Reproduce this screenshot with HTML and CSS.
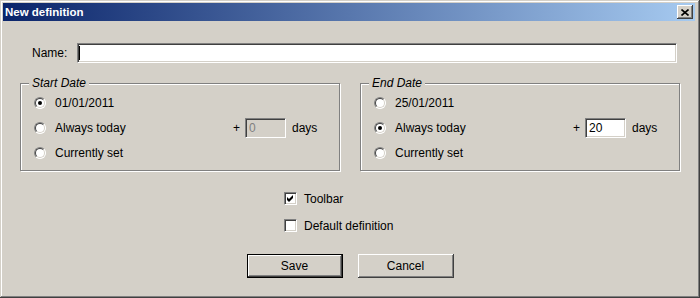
FILE: index.html
```html
<!DOCTYPE html>
<html lang="en">
<head>
  <meta charset="UTF-8" />
  <title>New definition</title>
  <link rel="stylesheet" href="styles.css">
</head>
<body>
  <div class="window">
    <div class="titlebar">
      <span class="title">New definition</span>
      <span class="close">
        <svg width="8" height="7" viewBox="0 0 8 7"><path d="M0.5 0.5 L7.5 6.5 M7.5 0.5 L0.5 6.5" stroke="#000" stroke-width="1.6" fill="none"/></svg>
      </span>
    </div>

    <div class="content">
      <div class="name-row">
        <label>Name:</label>
        <div class="field name-field"><span class="caret"></span></div>
      </div>

      <div class="groups">
        <fieldset class="group">
          <legend>Start Date</legend>
          <div class="opt-row"><span class="opt"><span class="radio on"></span>01/01/2011</span></div>
          <div class="opt-row">
            <span class="opt"><span class="radio"></span>Always today</span>
            <span class="plus">+</span>
            <div class="field days-field disabled">0</div>
            <span class="days">days</span>
          </div>
          <div class="opt-row"><span class="opt"><span class="radio"></span>Currently set</span></div>
        </fieldset>

        <fieldset class="group">
          <legend>End Date</legend>
          <div class="opt-row"><span class="opt"><span class="radio"></span>25/01/2011</span></div>
          <div class="opt-row">
            <span class="opt"><span class="radio on"></span>Always today</span>
            <span class="plus">+</span>
            <div class="field days-field">20</div>
            <span class="days">days</span>
          </div>
          <div class="opt-row"><span class="opt"><span class="radio"></span>Currently set</span></div>
        </fieldset>
      </div>

      <div class="checks">
        <div class="check-row">
          <span class="checkbox"><svg width="7" height="7" viewBox="0 0 7 7"><path d="M0 2 L2 4 L6 0 L6 3 L2 7 L0 5 Z" fill="#000"/></svg></span>
          Toolbar
        </div>
        <div class="check-row">
          <span class="checkbox"></span>
          Default definition
        </div>
      </div>

      <div class="buttons">
        <button class="btn default">Save</button>
        <button class="btn">Cancel</button>
      </div>
    </div>
  </div>
</body>
</html>
```

FILE: styles.css
```css
body {
  margin: 0;
  font-family: "Liberation Sans", Arial, sans-serif;
  font-size: 12px;
  color: #000;
}

.window {
  width: 700px;
  height: 298px;
  box-sizing: border-box;
  background: #d4d0c8;
  padding: 3px 5px 4px 3px;
  box-shadow: inset -1px -1px #404040, inset 1px 1px #d4d0c8, inset -2px -2px #808080, inset 2px 2px #fff;
}

.titlebar {
  height: 18px;
  display: flex;
  align-items: center;
  justify-content: space-between;
  padding: 0 2px;
  background: linear-gradient(to right, #0a246a, #a6caf0);
}

.title {
  color: #fff;
  font-weight: bold;
  font-size: 11.5px;
}

.close {
  width: 16px;
  height: 14px;
  box-sizing: border-box;
  background: #d4d0c8;
  box-shadow: inset -1px -1px #404040, inset 1px 1px #fff, inset -2px -2px #808080;
  display: flex;
  align-items: center;
  justify-content: center;
}

.content {
  padding: 22px 15px 0 17px;
}

.name-row {
  display: flex;
  align-items: center;
  padding: 0 3px 0 12px;
}

.name-row label {
  flex: 0 0 45px;
}

.field {
  height: 20px;
  box-sizing: border-box;
  background: #fff;
  border: 1px solid;
  border-color: #808080 #fff #fff #808080;
  box-shadow: inset 1px 1px #404040, inset -1px -1px #d4d0c8;
  padding: 0 3px;
  display: flex;
  align-items: center;
}

.name-field {
  flex: 1;
  padding-left: 1px;
}

.caret {
  width: 1px;
  height: 14px;
  background: #000;
}

.groups {
  display: flex;
  gap: 20px;
  margin-top: 13px;
}

.group {
  flex: 0 0 320px;
  box-sizing: border-box;
  min-width: 0;
  margin: 0;
  padding: 0 8px 5px 8px;
  border: 1px solid #808080;
  box-shadow: 1px 1px 0 #fff, inset 1px 1px 0 #fff;
}

.group legend {
  padding: 0 3px;
  font-style: italic;
  line-height: 14px;
  background: #d4d0c8;
}

.opt-row {
  height: 25px;
  display: flex;
  align-items: center;
  padding-left: 5px;
}

.opt {
  flex: 0 0 199px;
  display: flex;
  align-items: center;
  gap: 9px;
}

.radio {
  position: relative;
  width: 12px;
  height: 12px;
  box-sizing: border-box;
  border-radius: 50%;
  border: 1px solid;
  border-color: #808080 #fff #fff #808080;
  background: #fff;
}

.radio::before {
  content: "";
  position: absolute;
  inset: 0;
  border-radius: 50%;
  border: 1px solid;
  border-color: #404040 #d4d0c8 #d4d0c8 #404040;
}

.radio.on::after {
  content: "";
  position: absolute;
  left: 3px;
  top: 3px;
  width: 4px;
  height: 4px;
  border-radius: 50%;
  background: #000;
}

.plus {
  margin-right: 5px;
}

.days-field {
  width: 41px;
}

.field.disabled {
  background: #d4d0c8;
  color: #808080;
}

.days {
  margin-left: 6px;
}

.checks {
  margin-top: 14px;
  padding-left: 264px;
}

.check-row {
  height: 27px;
  display: flex;
  align-items: center;
  gap: 7px;
}

.checkbox {
  width: 13px;
  height: 13px;
  box-sizing: border-box;
  background: #fff;
  border: 1px solid;
  border-color: #808080 #fff #fff #808080;
  box-shadow: inset 1px 1px #404040, inset -1px -1px #d4d0c8;
  display: flex;
  align-items: center;
  justify-content: center;
}

.buttons {
  display: flex;
  justify-content: center;
  gap: 15px;
  margin-top: 15px;
}

.btn {
  width: 96px;
  height: 24px;
  box-sizing: border-box;
  padding: 0;
  border: none;
  background: #d4d0c8;
  font-family: inherit;
  font-size: 12px;
  color: #000;
  box-shadow: inset -1px -1px #404040, inset 1px 1px #fff, inset -2px -2px #808080;
}

.btn.default {
  border: 1px solid #000;
}
```
